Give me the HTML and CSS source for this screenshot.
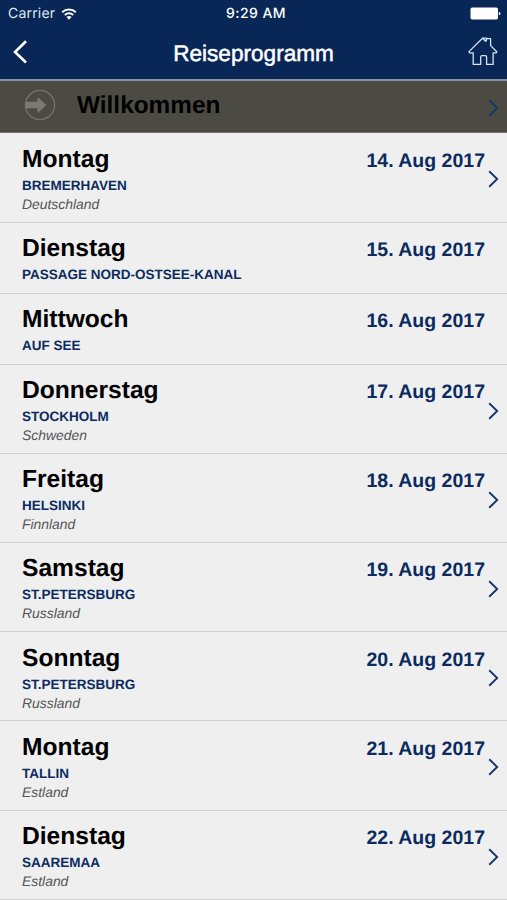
FILE: index.html
```
<!DOCTYPE html>
<html lang="de">

<head>
    <meta charset="utf-8">
    <title>Reiseprogramm</title>
    <link rel="stylesheet" href="styles.css">
</head>

<body>
    <header class="header">
        <div class="status">
            <div class="carrier">
                <span>Carrier</span>
                <svg width="16" height="12" viewBox="0 0 16 12" fill="none" stroke="#fff" stroke-width="1.9">
                    <path d="M1.2 4.3a9.8 9.8 0 0 1 13.6 0M3.8 7a6.1 6.1 0 0 1 8.4 0" />
                    <path d="M8 11.7L5.4 9.1a3.8 3.8 0 0 1 5.2 0z" fill="#fff" stroke="none" />
                </svg>
            </div>
            <span class="time">9:29 AM</span>
            <svg class="battery" width="31" height="13" viewBox="0 0 31 13" fill="#fff">
                <rect x="0.5" y="0.5" width="27.5" height="12" rx="1.7" />
                <path d="M28.8 4.7q1.7.4 1.7 1.8t-1.7 1.8z" />
            </svg>
        </div>
        <nav class="nav">
            <svg width="15" height="24" viewBox="0 0 15 24" fill="none" stroke="#fff" stroke-width="2.6">
                <path d="M13 1.2L2 12l11 10.5" />
            </svg>
            <h1 class="title">Reiseprogramm</h1>
            <svg class="home" width="30" height="30" viewBox="0 0 30 30" fill="none" stroke="#d5e3f4" stroke-width="1.3" stroke-linejoin="round">
                <path d="M1 14.6L14.5 1.2l3.2 3 1.3-2.5h3.6v6.9l6.2 6.2-.7 1.1h-3v11.5h-6.5v-7.3q0-1.5-1.5-1.5h-2.9q-1.5 0-1.5 1.5v7.3H5.2V15.9H1.6z" />
                <path d="M14.5 1.2h4.2l-1 3" />
            </svg>
        </nav>
    </header>

    <div class="welcome">
        <svg width="32" height="32" viewBox="0 0 32 32">
            <circle cx="16" cy="16" r="14.6" fill="none" stroke="#74736c" stroke-width="1.3" />
            <path d="M2 12.8h11.5V8L22.3 16l-8.8 8v-4.7H2z" fill="#7b7a74" />
        </svg>
        <span class="welcome-text">Willkommen</span>
        <svg class="arrow" viewBox="0 0 11 18"><path d="M1.2 1.2L9.2 9l-8 7.8" /></svg>
    </div>

    <ul class="days">
        <li class="day">
            <div class="info">
                <h2>Montag</h2>
                <p class="port">BREMERHAVEN</p>
                <p class="country">Deutschland</p>
            </div>
            <span class="date">14. Aug 2017</span>
            <svg class="arrow" viewBox="0 0 11 18"><path d="M1.2 1.2L9.2 9l-8 7.8" /></svg>
        </li>
        <li class="day short">
            <div class="info">
                <h2>Dienstag</h2>
                <p class="port">PASSAGE NORD-OSTSEE-KANAL</p>
            </div>
            <span class="date">15. Aug 2017</span>
        </li>
        <li class="day short">
            <div class="info">
                <h2>Mittwoch</h2>
                <p class="port">AUF SEE</p>
            </div>
            <span class="date">16. Aug 2017</span>
        </li>
        <li class="day">
            <div class="info">
                <h2>Donnerstag</h2>
                <p class="port">STOCKHOLM</p>
                <p class="country">Schweden</p>
            </div>
            <span class="date">17. Aug 2017</span>
            <svg class="arrow" viewBox="0 0 11 18"><path d="M1.2 1.2L9.2 9l-8 7.8" /></svg>
        </li>
        <li class="day">
            <div class="info">
                <h2>Freitag</h2>
                <p class="port">HELSINKI</p>
                <p class="country">Finnland</p>
            </div>
            <span class="date">18. Aug 2017</span>
            <svg class="arrow" viewBox="0 0 11 18"><path d="M1.2 1.2L9.2 9l-8 7.8" /></svg>
        </li>
        <li class="day">
            <div class="info">
                <h2>Samstag</h2>
                <p class="port">ST.PETERSBURG</p>
                <p class="country">Russland</p>
            </div>
            <span class="date">19. Aug 2017</span>
            <svg class="arrow" viewBox="0 0 11 18"><path d="M1.2 1.2L9.2 9l-8 7.8" /></svg>
        </li>
        <li class="day">
            <div class="info">
                <h2>Sonntag</h2>
                <p class="port">ST.PETERSBURG</p>
                <p class="country">Russland</p>
            </div>
            <span class="date">20. Aug 2017</span>
            <svg class="arrow" viewBox="0 0 11 18"><path d="M1.2 1.2L9.2 9l-8 7.8" /></svg>
        </li>
        <li class="day">
            <div class="info">
                <h2>Montag</h2>
                <p class="port">TALLIN</p>
                <p class="country">Estland</p>
            </div>
            <span class="date">21. Aug 2017</span>
            <svg class="arrow" viewBox="0 0 11 18"><path d="M1.2 1.2L9.2 9l-8 7.8" /></svg>
        </li>
        <li class="day">
            <div class="info">
                <h2>Dienstag</h2>
                <p class="port">SAAREMAA</p>
                <p class="country">Estland</p>
            </div>
            <span class="date">22. Aug 2017</span>
            <svg class="arrow" viewBox="0 0 11 18"><path d="M1.2 1.2L9.2 9l-8 7.8" /></svg>
        </li>
    </ul>
</body>

</html>
```

FILE: styles.css
```
* {
    box-sizing: border-box;
}

body {
    margin: 0;
    height: 900px;
    overflow: hidden;
    background: #efefef;
    font-family: "Liberation Sans", Arial, Helvetica, sans-serif;
    text-rendering: geometricPrecision;
}

h1,
h2,
p {
    margin: 0;
}

svg {
    display: block;
    flex-shrink: 0;
}

.header {
    height: 81px;
    background: #082757;
    border-bottom: 2px solid #8c93a3;
    color: #fff;
}

.status {
    height: 27px;
    padding: 0 6px 0 8px;
    display: grid;
    grid-template-columns: 1fr auto 1fr;
    align-items: center;
    font-family: Inter, Roboto, sans-serif;
    font-size: 14px;
    line-height: 27px;
}

.carrier {
    display: flex;
    align-items: center;
    gap: 6px;
    color: #dfe7f2;
    letter-spacing: 0.2px;
}

.time {
    padding-left: 3px;
    font-weight: 500;
    letter-spacing: 0.45px;
}

.battery {
    justify-self: end;
}

.nav {
    height: 52px;
    padding: 0 9px 2px 13px;
    display: grid;
    grid-template-columns: 30px 1fr 30px;
    align-items: center;
}

.title {
    padding: 4px 4px 0 0;
    text-align: center;
    font-size: 22.6px;
    font-weight: normal;
    line-height: 28px;
    -webkit-text-stroke: 0.5px #fff;
}

.welcome {
    height: 52px;
    padding: 0 8px 4px 24px;
    display: flex;
    align-items: center;
    background: #4c4b43;
    border-bottom: 1px solid #74736d;
}

.welcome-text {
    flex-grow: 1;
    margin-left: 21px;
    padding-top: 2px;
    color: #000;
    font-size: 24.4px;
    font-weight: bold;
    line-height: 30px;
}

.arrow {
    width: 11px;
    height: 18px;
    fill: none;
    stroke: #17376b;
    stroke-width: 1.9;
}

.welcome .arrow {
    margin-top: 6px;
}

.days {
    list-style-type: none;
    margin: 0;
    padding: 0.4px 0 0;
}

.day {
    height: 89.2px;
    padding: 10.5px 8px 0 22px;
    display: flex;
    align-items: flex-start;
    border-bottom: 1px solid #d0d0d0;
}

.day.short {
    height: 71px;
    padding-right: 22px;
}

.info {
    flex-grow: 1;
}

.info h2 {
    font-size: 24.6px;
    font-weight: bold;
    line-height: 31px;
    color: #000;
}

.port {
    font-size: 13.5px;
    font-weight: bold;
    line-height: 22px;
    color: #0b2b60;
}

.country {
    font-size: 13.9px;
    font-style: italic;
    line-height: 15px;
    color: #555;
}

.date {
    padding-top: 5px;
    font-size: 19.5px;
    font-weight: bold;
    line-height: 24px;
    color: #0b2b60;
}

.day .arrow {
    margin: 26.5px 0 0 3px;
}
```
